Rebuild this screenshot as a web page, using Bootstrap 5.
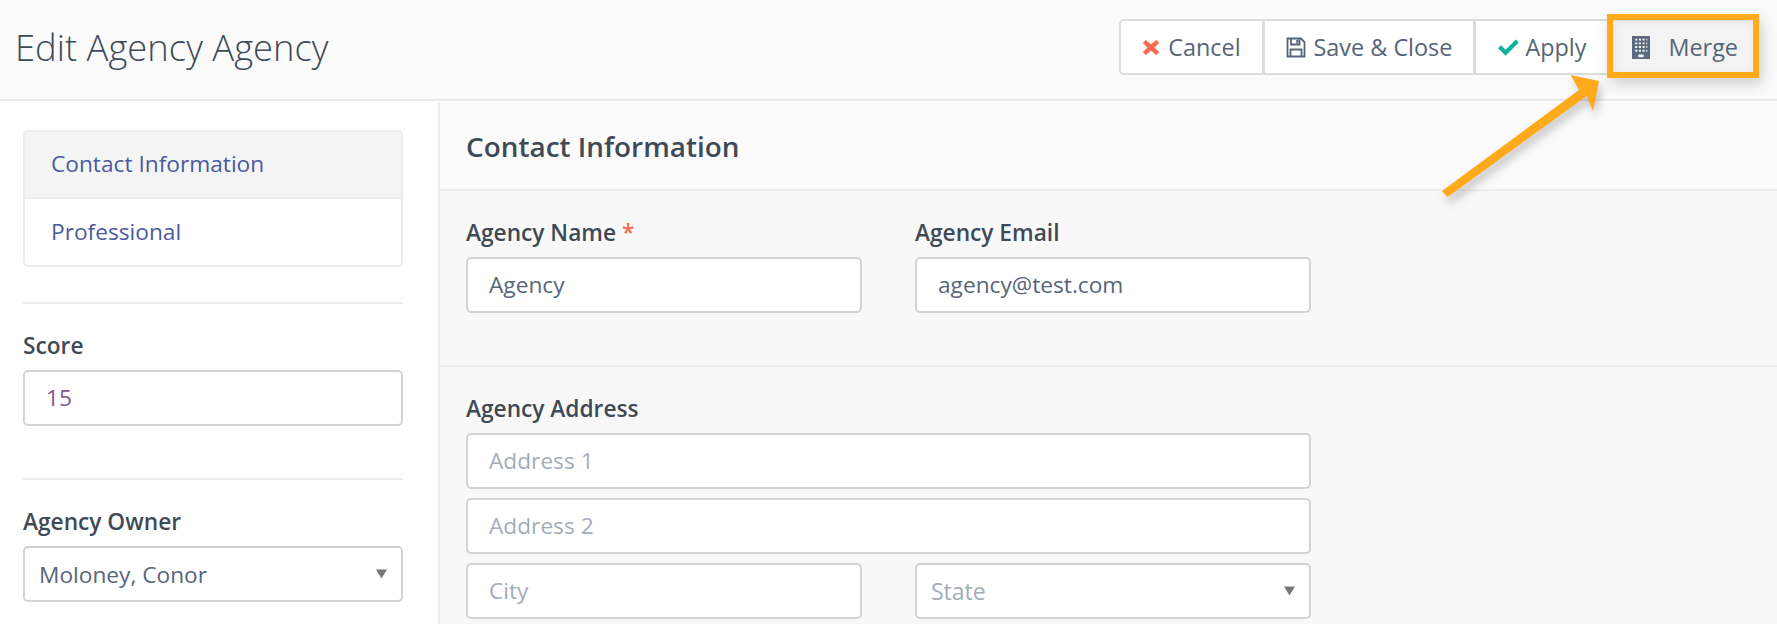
<!DOCTYPE html>
<html lang="en">

<head>
  <meta charset="UTF-8">
  <title>Edit Agency Agency</title>
  <link href="https://cdn.jsdelivr.net/npm/bootstrap@5.3.3/dist/css/bootstrap.min.css" rel="stylesheet">
  <style>
    html, body { height: 624px; overflow: hidden; }
    body { font-family: "Open Sans", sans-serif; font-size: 20px; color: #3f4a57; background: #fff; }
    .page-head { height: 101px; background: #fbfbfb; border-bottom: 2px solid #e9ebee; padding: 0 18px 5px 15px; }
    .page-head h1 { font-family: "Open Sans", sans-serif; font-size: 36.4px; font-weight: 300; color: #3f4a57; margin: 0; padding-top: 2px; }
    .tool-group .btn { height: 56px; background: #fff; border: 2px solid #dcdcdc; color: #566579; font-size: 23.4px; line-height: 30px; padding: 0 21px; display: flex; align-items: center; gap: 8px; --bs-btn-border-radius: 5px; }
    .tool-group .btn-apply { padding: 0 22px; gap: 6px; }
    .tool-group .btn-merge { background: #f3f3f3; border-color: #e6e6e6; padding: 0 19px 0 21px; gap: 18px; }
    .side-col { width: 438px; flex: none; padding: 29px 35px 0 23px; }
    .main-col { flex: 1; background: #f8f8f8; border-left: 2px solid #ececec; margin-top: 2px; height: 521px; }
    .side-list { --bs-list-group-border-color: #ececef; --bs-list-group-border-width: 2px; --bs-list-group-border-radius: 5px; }
    .side-list .list-group-item { height: 68px; display: flex; align-items: center; padding: 0 26px; color: #4a5a9f; font-size: 22.7px; text-decoration: none; }
    .side-list .list-group-item.current { background: #f4f4f4; height: 69px; }
    .side-rule { height: 2px; background: #ececf1; margin: 0; opacity: 1; border: 0; }
    .side-rule-first { margin-top: 35px; }
    .side-field { padding-top: 28px; height: 174px; }
    .field-label { display: block; font-size: 22.7px; font-weight: 600; color: #3f4a57; line-height: 28px; margin-bottom: 10px; }
    .req { color: #f4694f; }
    .form-control.box, .form-select.box { height: 55.5px; border: 2px solid #d3d3d3; border-radius: 5px; font-size: 22.7px; color: #566579; padding: 0 21px; box-shadow: none; background-color: #fff; }
    .form-control.box::placeholder { color: #a3adb8; opacity: 1; }
    .form-select.box { padding: 3px 40px 0 14px; background-image: url("data:image/svg+xml,%3csvg xmlns='http://www.w3.org/2000/svg' viewBox='0 0 12 10'%3e%3cpath fill='%23777' d='M0 0h12L6 10z'/%3e%3c/svg%3e"); background-size: 11px 10px; background-position: right 14px center; border-top-color: #cfcfcf; }
    .form-select.box.empty { color: #a3adb8; font-size: 23px; padding-top: 1px; }
    .score-val { color: #7a5b86 !important; }
    .sec-head { height: 88px; background: #fbfbfb; border-bottom: 2px solid #ececec; padding: 2px 0 0 26px; display: flex; align-items: center; }
    .sec-head h2 { font-family: "Open Sans", sans-serif; font-size: 27.9px; font-weight: 600; color: #3f4a57; margin: 0; }
    .sec-block { padding: 28px 0 0 26px; }
    .sec-names { height: 176px; border-bottom: 2px solid #ececf1; }
    .addr-grid { display: grid; grid-template-columns: 396px 396px; column-gap: 53px; width: 845px; }
    .addr-wide { grid-column: 1 / 3; }
    .addr-stack { row-gap: 9.5px; }
    .note-box { position: absolute; left: 1607px; top: 14px; width: 152px; height: 64px; border: 6px solid #ffa91b; box-shadow: 3px 6px 14px rgba(0,0,0,.18), inset 2px 2px 8px rgba(0,0,0,.06); pointer-events: none; }
    .note-arrow { position: absolute; left: 1430px; top: 60px; overflow: visible; filter: drop-shadow(3px 6px 5px rgba(0,0,0,.22)); }
  </style>
</head>

<body>

  <!-- Page header -->
  <header class="page-head d-flex align-items-center justify-content-between">
    <h1>Edit Agency Agency</h1>
    <div class="btn-group tool-group" role="group">
      <button type="button" class="btn">
        <svg width="18" height="17" viewBox="0 0 17 17" preserveAspectRatio="none"><path fill="#fb6a4e" d="M3.600.9 8.500 5.200 13.400.9l2.900 2.900-4.400 4.700 4.400 4.700-2.900 2.900-4.900-4.300-4.900 4.300L.7 13.200l4.400-4.700L.7 3.800z"/></svg>
        Cancel
      </button>
      <button type="button" class="btn">
        <svg width="20" height="21" viewBox="0 0 20 21"><path fill="none" stroke="#566579" stroke-width="1.800" d="M1.500 1.500h13.500l3.500 3.500v14.500h-17z"/><path fill="none" stroke="#566579" stroke-width="1.800" d="M5 1.500v6h8.500v-6M4.500 19.500v-7h11v7"/><path fill="#566579" d="M10.300 2.800h2v3.500h-2z"/></svg>
        Save &amp; Close
      </button>
      <button type="button" class="btn btn-apply">
        <svg width="21" height="17" viewBox="0 0 21 17"><path fill="#0fb39a" d="M0 9.200 3 6.200l4.600 4.500L17.800.5l3 3L7.600 16.700z"/></svg>
        Apply
      </button>
      <button type="button" class="btn btn-merge">
        <svg width="18" height="23" viewBox="0 0 17 25" preserveAspectRatio="none"><path fill="#5b6a7f" fill-rule="evenodd" d="M0 0h17v25H0zM3 3v2h2V3zm3.500 0v2h2V3zM10 3v2h2V3zm3.500 0v2h1V3zM3 7v2h2V7zm3.500 0v2h2V7zM10 7v2h2V7zm3.500 0v2h1V7zM3 11v2h2v-2zm3.500 0v2h2v-2zM10 11v2h2v-2zm3.500 0v2h1v-2zM3 15v2h2v-2zm3.500 0v2h2v-2zM10 15v2h2v-2zm3.500 0v2h1v-2zM6 20v3h5v-3z"/></svg>
        Merge
      </button>
    </div>
  </header>

  <div class="d-flex">
    <!-- Left column -->
    <aside class="side-col">
      <div class="list-group side-list">
        <a href="#" class="list-group-item current">Contact Information</a>
        <a href="#" class="list-group-item">Professional</a>
      </div>
      <hr class="side-rule side-rule-first">
      <div class="side-field">
        <label class="field-label">Score</label>
        <input type="text" class="form-control box score-val" value="15">
      </div>
      <hr class="side-rule">
      <div class="side-field">
        <label class="field-label">Agency Owner</label>
        <select class="form-select box">
          <option>Moloney, Conor</option>
        </select>
      </div>
    </aside>

    <!-- Main form -->
    <main class="main-col">
      <div class="sec-head">
        <h2>Contact Information</h2>
      </div>
      <div class="sec-block sec-names">
        <div class="addr-grid">
          <div>
            <label class="field-label">Agency Name <span class="req">*</span></label>
            <input type="text" class="form-control box" value="Agency">
          </div>
          <div>
            <label class="field-label">Agency Email</label>
            <input type="text" class="form-control box" value="agency@test.com">
          </div>
        </div>
      </div>
      <div class="sec-block">
        <label class="field-label">Agency Address</label>
        <div class="addr-grid addr-stack">
          <input type="text" class="form-control box addr-wide" placeholder="Address 1">
          <input type="text" class="form-control box addr-wide" placeholder="Address 2">
          <input type="text" class="form-control box" placeholder="City">
          <select class="form-select box empty">
            <option>State</option>
          </select>
        </div>
      </div>
    </main>
  </div>

  <!-- Annotation drawn over the toolbar -->
  <div class="note-box"></div>
  <svg class="note-arrow" width="175" height="140" viewBox="0 0 175 140">
    <path fill="#ffa91b" d="M140.600 15 169 21l-6 30-6.500-15L17.600 137 12 131 149 30z"/>
  </svg>

  <script src="https://cdn.jsdelivr.net/npm/bootstrap@5.3.3/dist/js/bootstrap.bundle.min.js"></script>
</body>

</html>
